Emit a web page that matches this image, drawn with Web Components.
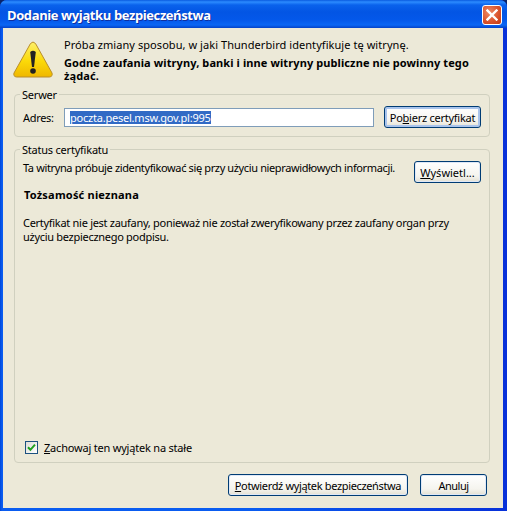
<!DOCTYPE html>
<html>
<head>
<meta charset="utf-8">
<style>
  html, body { margin: 0; padding: 0; background: #0a246a; }
  body { width: 507px; height: 511px; overflow: hidden; }
</style>
</head>
<body>
<xp-window heading="Dodanie wyjątku bezpieczeństwa">
  <warn-header>
    <div>Próba zmiany sposobu, w jaki Thunderbird identyfikuje tę witrynę.</div>
    <b slot="strong">Godne zaufania witryny, banki i inne witryny publiczne nie powinny tego żądać.</b>
  </warn-header>
  <xp-group legend="Serwer" style="height:43px">
    <server-row></server-row>
  </xp-group>
  <xp-group legend="Status certyfikatu" style="height:314px;margin-top:12px">
    <cert-status></cert-status>
  </xp-group>
  <dialog-actions></dialog-actions>
</xp-window>

<script>
const fontStack = '"Noto Sans", "Liberation Sans", sans-serif';

class XpWindow extends HTMLElement {
  constructor() {
    super();
    this.attachShadow({ mode: 'open' });
    this.shadowRoot.innerHTML = `
<style>
  :host { display: flex; flex-direction: column; width: 507px; height: 511px; box-sizing: border-box;
    font: 11px/13px ${fontStack}; color: #000; overflow: hidden; border-radius: 7px 7px 0 0;
    background: linear-gradient(90deg, #0046d8 0, #0a5cf0 2px, #0a5cf0 50%, #0831d9 100%); }
  .bar { height: 28px; flex: none; display: flex; align-items: center; justify-content: space-between;
    padding: 0 5px 0 7px; box-sizing: border-box;
    background: linear-gradient(180deg, #0a5be0 0, #2c8bff 2px, #0a62ec 5px, #0355e4 12px, #0458ea 20px, #0a66f4 25px, #0442c8 28px); }
  .title { color: #fff; font: bold 13px/16px "Open Sans", "Liberation Sans", sans-serif;
    text-shadow: 1px 1px 0 #0f2f9e; margin-top: 1px; letter-spacing: -0.4px; }
  .close { width: 20px; height: 20px; box-sizing: border-box; border: 1px solid #fff; border-radius: 3px; margin-top: 1px;
    background: radial-gradient(circle at 35% 35%, #ee8a66, #d9512a 60%, #c13a14); display: flex; align-items: center; justify-content: center; }
  .body { flex: 1; margin: 0 4px 3px 3px; background: #ece9d8; padding: 0 13px 0 11px; }
</style>
<div class="bar">
  <div class="title"></div>
  <div class="close"><svg width="12" height="12" viewBox="0 0 12 12"><path d="M1.5 1.5 10.5 10.5M10.5 1.5 1.5 10.5" stroke="#fff" stroke-width="2.4" stroke-linecap="square"/></svg></div>
</div>
<div class="body"><slot></slot></div>`;
  }
  connectedCallback() {
    this.shadowRoot.querySelector('.title').textContent = this.getAttribute('heading');
  }
}
customElements.define('xp-window', XpWindow);

class WarnHeader extends HTMLElement {
  constructor() {
    super();
    this.attachShadow({ mode: 'open' });
    this.shadowRoot.innerHTML = `
<style>
  :host { display: flex; height: 66px; box-sizing: border-box; padding-top: 10px; }
  svg { flex: none; display: block; margin-top: 3px; margin-left: -1px; }
  .txt { margin-left: 11px; width: 410px; letter-spacing: 0.06px; }
  .strong { display: block; margin-top: 5px; letter-spacing: 0.1px; }
</style>
<svg width="40" height="37" viewBox="0 0 40 37">
  <defs>
    <linearGradient id="g" x1="0" y1="0" x2="0" y2="1">
      <stop offset="0" stop-color="#fdf06a"/><stop offset=".55" stop-color="#fbd908"/><stop offset="1" stop-color="#efb700"/>
    </linearGradient>
  </defs>
  <path d="M17.5 2.5Q20 -.5 22.5 2.5L39 32Q40 35.5 36.5 36H3.5Q0 35.5 1 32Z" fill="url(#g)" stroke="#b98e2a" stroke-width="1"/>
  <path d="M17.2 11Q20 8.5 22.8 11L21 26H19Z" fill="#222"/>
  <circle cx="20" cy="30" r="2.8" fill="#222"/>
</svg>
<div class="txt"><slot></slot><span class="strong"><slot name="strong"></slot></span></div>`;
  }
}
customElements.define('warn-header', WarnHeader);

class XpGroup extends HTMLElement {
  constructor() {
    super();
    this.attachShadow({ mode: 'open' });
    this.shadowRoot.innerHTML = `
<style>
  :host { display: block; position: relative; box-sizing: border-box; border: 1px solid #d0d0bf; border-radius: 4px; }
  .legend { position: absolute; top: -7px; left: 5px; padding: 0 2px; background: #ece9d8; line-height: 13px; letter-spacing: -0.22px; }
</style>
<div class="legend"></div><slot></slot>`;
  }
  connectedCallback() {
    this.shadowRoot.querySelector('.legend').textContent = this.getAttribute('legend');
  }
}
customElements.define('xp-group', XpGroup);

class XpButton extends HTMLElement {
  constructor() {
    super();
    this.attachShadow({ mode: 'open' });
    this.shadowRoot.innerHTML = `
<style>
  :host { display: flex; align-items: center; justify-content: center; height: 22px; box-sizing: border-box;
    border: 1px solid #003c74; border-radius: 3px; white-space: nowrap; flex: none; letter-spacing: -0.25px;
    background: linear-gradient(180deg, #fff 0, #f5f4ee 70%, #e3e0d2 100%);
    box-shadow: inset 0 0 0 1px #dfe8f6; }
</style>
<slot></slot>`;
  }
}
customElements.define('xp-button', XpButton);

class ServerRow extends HTMLElement {
  constructor() {
    super();
    this.attachShadow({ mode: 'open' });
    this.shadowRoot.innerHTML = `
<style>
  :host { display: flex; align-items: center; padding: 11px 8px 0 8px; }
  label { width: 41px; flex: none; letter-spacing: -0.3px; }
  .field { width: 310px; height: 19px; box-sizing: border-box; border: 1px solid #7f9db9; background: #fff;
    display: flex; align-items: center; padding-left: 5px; flex: none; }
  .sel { background: #316ac5; color: #fff; letter-spacing: -0.22px; }
  xp-button { width: 97px; margin-left: 10px; box-shadow: inset 0 0 0 2px #a9c4ec; }
</style>
<label>Adres:</label>
<div class="field"><span class="sel">poczta.pesel.msw.gov.pl:995</span></div>
<xp-button>Po<u>b</u>ierz certyfikat</xp-button>`;
  }
}
customElements.define('server-row', ServerRow);

class CertStatus extends HTMLElement {
  constructor() {
    super();
    this.attachShadow({ mode: 'open' });
    this.shadowRoot.innerHTML = `
<style>
  :host { display: flex; flex-direction: column; height: 100%; box-sizing: border-box; padding: 11px 8px 0 8px; }
  .top { display: flex; justify-content: space-between; align-items: flex-start; }
  .top div { white-space: nowrap; letter-spacing: -0.37px; }
  xp-button { width: 67px; }
  xp-button span { letter-spacing: 0; }
  .who { font-weight: bold; margin: 5px 0 0 1px; letter-spacing: 0.2px; }
  .why { margin-top: 15px; width: 455px; line-height: 14px; letter-spacing: -0.29px; }
  .keep { margin-top: auto; margin-bottom: 8px; margin-left: 2px; display: flex; align-items: center; letter-spacing: -0.2px; }
  .box { width: 13px; height: 13px; box-sizing: border-box; border: 1px solid #1c5180; margin-right: 6px; flex: none;
    background: linear-gradient(135deg, #dcdcd7, #fff); display: flex; align-items: center; justify-content: center; }
</style>
<div class="top"><div>Ta witryna próbuje zidentyfikować się przy użyciu nieprawidłowych informacji.</div><xp-button><span><u>W</u>yświetl...</span></xp-button></div>
<div class="who">Tożsamość nieznana</div>
<div class="why">Certyfikat nie jest zaufany, ponieważ nie został zweryfikowany przez zaufany organ przy użyciu bezpiecznego podpisu.</div>
<div class="keep"><div class="box"><svg width="9" height="9" viewBox="0 0 9 9"><path d="M1 4.2 3.4 6.8 8 1.6" fill="none" stroke="#21a121" stroke-width="2"/></svg></div><span><u>Z</u>achowaj ten wyjątek na stałe</span></div>`;
  }
}
customElements.define('cert-status', CertStatus);

class DialogActions extends HTMLElement {
  constructor() {
    super();
    this.attachShadow({ mode: 'open' });
    this.shadowRoot.innerHTML = `
<style>
  :host { display: flex; justify-content: flex-end; gap: 12px; margin-top: 11px; margin-right: 3px; }
</style>
<xp-button style="width:180px"><span style="letter-spacing:-0.35px"><u>P</u>otwierdź wyjątek bezpieczeństwa</span></xp-button>
<xp-button style="width:67px"><span style="letter-spacing:-0.5px">Anuluj</span></xp-button>`;
  }
}
customElements.define('dialog-actions', DialogActions);
</script>
</body>
</html>
